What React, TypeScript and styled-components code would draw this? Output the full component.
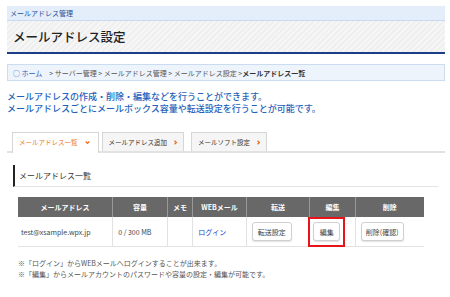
import React from 'react';
import styled, { createGlobalStyle } from 'styled-components';

const GlobalStyle = createGlobalStyle`
    body {
        margin: 0;
        background: #fff;
        font-family: "Noto Sans CJK JP", "Liberation Sans", sans-serif;
    }
`;

const Page = styled.div`
    width: 438px;
    margin-left: 7px;
    padding-top: 6px;
`;

const TopBar = styled.div`
    height: 15px;
    background: #e4eefa;
    border-bottom: 1px solid #c9d9ef;
    box-sizing: border-box;
    padding-left: 3px;
    font-size: 7px;
    line-height: 14px;
    color: #1d4f98;
`;

const TitleBand = styled.div`
    height: 33px;
    box-sizing: border-box;
    background: repeating-linear-gradient(135deg, #efefef 0 2px, #f6f6f6 2px 4px);
    border-bottom: 2px solid #1b3f86;
    padding-left: 6px;
    display: flex;
    align-items: center;
    font-size: 12.5px;
    font-weight: 500;
    color: #222;
`;

const Breadcrumb = styled.div`
    margin-top: 10px;
    height: 17px;
    box-sizing: border-box;
    background: #eef4fc;
    border: 1px solid #cbdbf0;
    padding-left: 5px;
    display: flex;
    align-items: center;
    font-size: 7px;
    color: #555;
    white-space: nowrap;
`;

const Home = styled.span`
    color: #1d5fc4;
    margin-right: 7px;
`;

const Current = styled.span`
    color: #333;
    font-weight: bold;
`;

const Description = styled.div`
    margin-top: 10px;
    font-size: 9px;
    line-height: 12px;
    color: #1e62bc;
    font-weight: 500;
`;

const Tabs = styled.div`
    margin-top: 17px;
    display: flex;
    padding-left: 5px;
    border-bottom: 2px solid #e2e2e2;
`;

const Tab = styled.div<{ $active?: boolean }>`
    height: ${(p) => (p.$active ? '21px' : '19px')};
    margin-bottom: ${(p) => (p.$active ? '-2px' : '0')};
    margin-right: ${(p) => (p.$active ? '3px' : '7px')};
    box-sizing: border-box;
    padding: 0 ${(p) => (p.$active ? '8px' : '5px')} 0 6px;
    padding-bottom: ${(p) => (p.$active ? '2px' : '0')};
    border: 1px solid #d6d6d6;
    border-bottom: none;
    background: ${(p) => (p.$active ? '#fff' : '#f5f5f5')};
    color: ${(p) => (p.$active ? '#ec7a2a' : '#333')};
    font-size: 6.5px;
    display: flex;
    align-items: center;
    gap: ${(p) => (p.$active ? '7px' : '6px')};
`;

const ChevronIcon = styled.svg`
    width: 5px;
    height: 5px;
    flex: none;
`;

function Chevron({ down }: { down?: boolean }) {
    return (
        <ChevronIcon viewBox="0 0 10 10">
            <path
                d={down ? 'M1.5 3 L5 6.8 L8.5 3' : 'M3 1.5 L6.8 5 L3 8.5'}
                fill="none"
                stroke="#ec6a1a"
                strokeWidth="2.4"
            />
        </ChevronIcon>
    );
}

const Section = styled.div`
    margin: 12px 7px 0 6px;
`;

const Heading = styled.div`
    height: 21px;
    border-left: 2px solid #222;
    border-bottom: 1px solid #e4e4e4;
    padding-left: 4px;
    display: flex;
    align-items: center;
    font-size: 8px;
    color: #333;
`;

const Table = styled.table`
    margin: 10px 0 0 5px;
    width: 406px;
    border-collapse: collapse;
    font-size: 7px;
`;

const Th = styled.th<{ $w: number }>`
    width: ${(p) => p.$w}px;
    height: 20px;
    padding: 0;
    background: #686868;
    color: #fff;
    font-weight: bold;
    border-left: 1px solid #999;
    &:first-child {
        border-left: none;
    }
`;

const Td = styled.td<{ $pad?: number }>`
    position: relative;
    height: 29px;
    padding: 0 0 0 ${(p) => (p.$pad ?? 5)}px;
    text-align: left;
    color: #444;
    border-left: 1px solid #e2e2e2;
    border-bottom: 1px solid #e2e2e2;
    &:first-child {
        border-left: none;
    }
`;

const Link = styled.span`
    color: #1a3fd0;
`;

const Highlight = styled.div`
    position: absolute;
    left: -2px;
    top: 0;
    width: 37px;
    height: 30px;
    box-sizing: border-box;
    border: 2px solid #e8141c;
`;

const Button = styled.span<{ $w: number }>`
    display: inline-flex;
    align-items: center;
    justify-content: center;
    width: ${(p) => p.$w}px;
    height: 19px;
    box-sizing: border-box;
    background: #fff;
    border: 1px solid #cfcfcf;
    border-radius: 3px;
    box-shadow: 0 1px 1px rgba(0, 0, 0, 0.12);
    color: #444;
    font-size: 7px;
    vertical-align: middle;
`;

const Notes = styled.div`
    margin: 11px 0 0 11px;
    font-size: 7px;
    line-height: 11px;
    color: #555;
`;

const columns = [
    { label: 'メールアドレス', w: 95 },
    { label: '容量', w: 55 },
    { label: 'メモ', w: 25 },
    { label: 'WEBメール', w: 54 },
    { label: '転送', w: 63 },
    { label: '編集', w: 45 },
    { label: '削除', w: 69 },
];

export default function App() {
    return (
        <>
            <GlobalStyle />
            <Page>
                <TopBar>メールアドレス管理</TopBar>
                <TitleBand>メールアドレス設定</TitleBand>
                <Breadcrumb>
                    <Home>○ ホーム</Home>
                    {'> サーバー管理 > メールアドレス管理 > メールアドレス設定 > '}
                    <Current>メールアドレス一覧</Current>
                </Breadcrumb>
                <Description>
                    メールアドレスの作成・削除・編集などを行うことができます。
                    <br />
                    メールアドレスごとにメールボックス容量や転送設定を行うことが可能です。
                </Description>
                <Tabs>
                    <Tab $active>
                        メールアドレス一覧 <Chevron down />
                    </Tab>
                    <Tab>
                        メールアドレス追加 <Chevron />
                    </Tab>
                    <Tab>
                        メールソフト設定 <Chevron />
                    </Tab>
                </Tabs>
                <Section>
                    <Heading>メールアドレス一覧</Heading>
                    <Table>
                        <thead>
                            <tr>
                                {columns.map((c) => (
                                    <Th key={c.label} $w={c.w}>{c.label}</Th>
                                ))}
                            </tr>
                        </thead>
                        <tbody>
                            <tr>
                                <Td $pad={3}>test@xsample.wpx.jp</Td>
                                <Td>0 / 300 MB</Td>
                                <Td />
                                <Td><Link>ログイン</Link></Td>
                                <Td><Button $w={40}>転送設定</Button></Td>
                                <Td $pad={3}>
                                    <Button $w={27}>編集</Button>
                                    <Highlight />
                                </Td>
                                <Td><Button $w={43}>削除(確認)</Button></Td>
                            </tr>
                        </tbody>
                    </Table>
                </Section>
                <Notes>
                    ※「ログイン」からWEBメールへログインすることが出来ます。
                    <br />
                    ※「編集」からメールアカウントのパスワードや容量の設定・編集が可能です。
                </Notes>
            </Page>
        </>
    );
}
